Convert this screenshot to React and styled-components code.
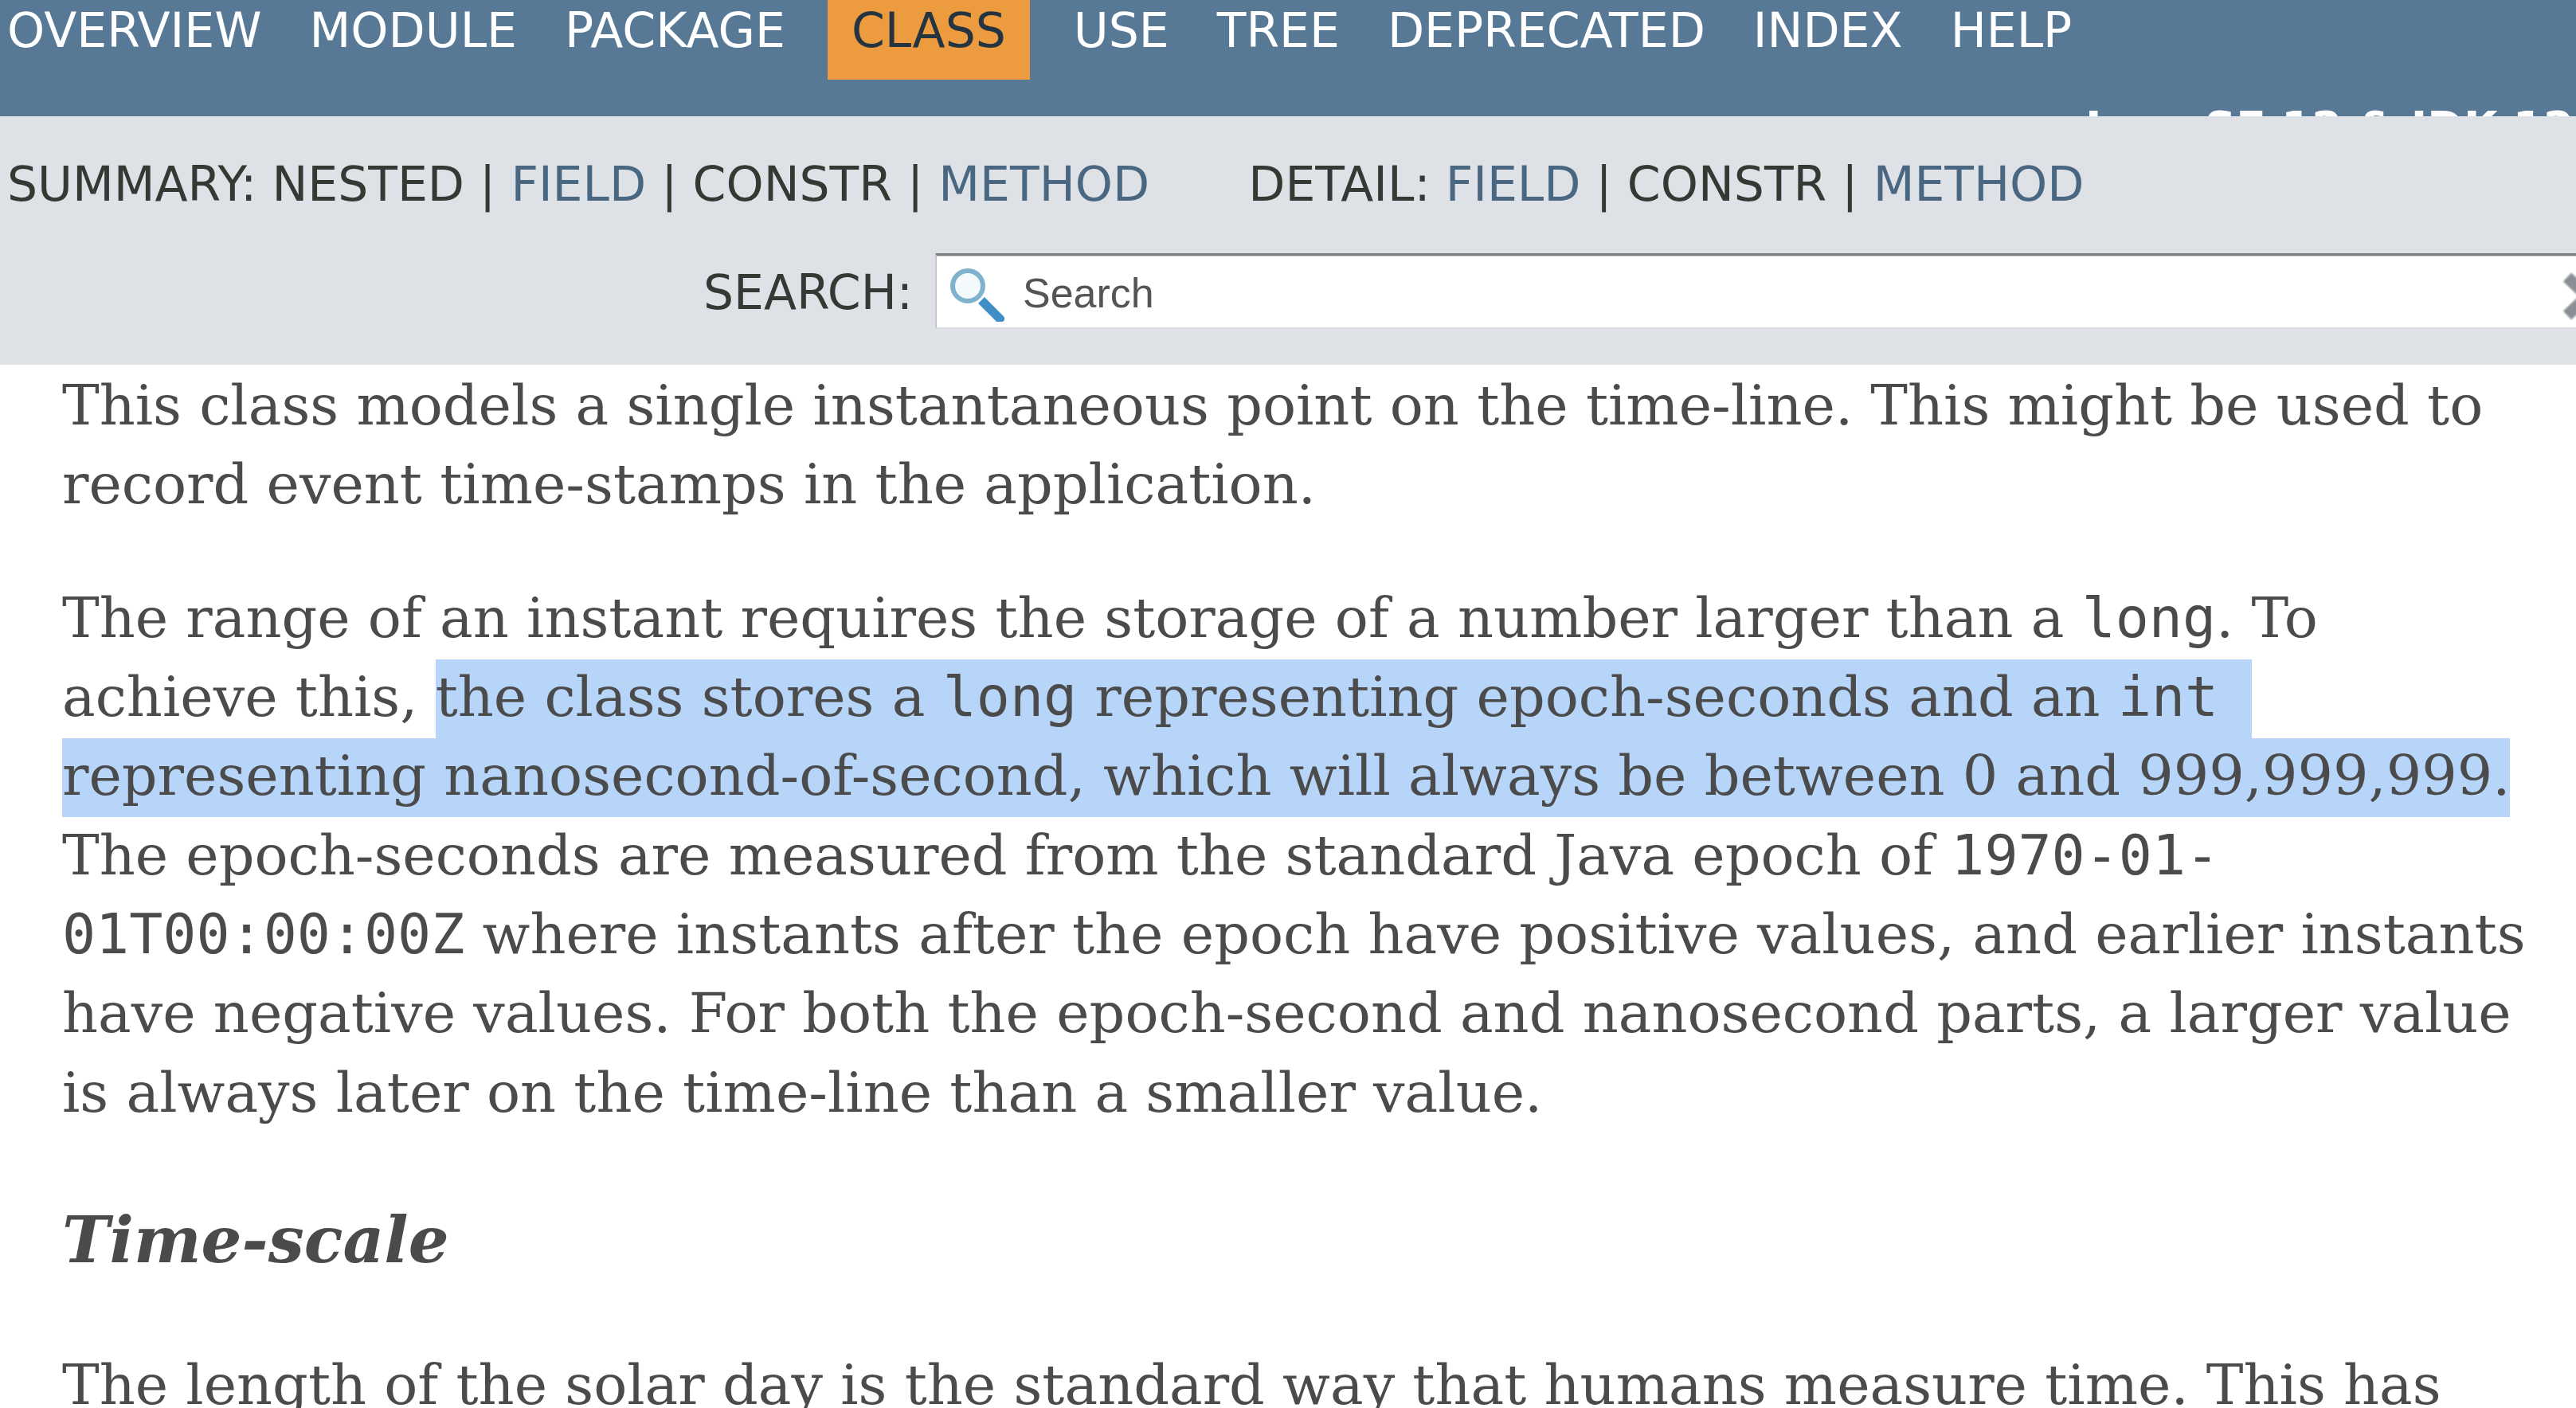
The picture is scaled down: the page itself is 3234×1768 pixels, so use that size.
import React from 'react'
import styled, { createGlobalStyle } from 'styled-components'

const GlobalStyle = createGlobalStyle`
    html, body {
        margin: 0;
        width: 3234px;
        height: 1768px;
        overflow: hidden;
        background: #fff;
    }
`

const Page = styled.div`
    width: 3234px;
    height: 1768px;
    overflow: hidden;
    font-family: "DejaVu Sans", sans-serif;
`

const TopNav = styled.nav`
    height: 146px;
    background: #577996;
    overflow: hidden;
    display: flex;
    flex-direction: column;
    color: #fff;
`

const NavList = styled.ul`
    display: flex;
    gap: 60px;
    list-style: none;
    margin: 0;
    padding: 0 0 0 9px;
    height: 100px;
    flex: none;
`

const NavItem = styled.li`
    font-size: 60px;
    line-height: 76px;
    white-space: nowrap;
    ${props => props.$active && `
        background: #ec9b3e;
        color: #253441;
        padding: 0 30px;
        margin: 0 -5px 0 -7px;
    `}
`

const AboutLanguage = styled.div`
    margin: 25px 0 0 2618px;
    font-size: 55px;
    line-height: 70px;
    font-weight: bold;
    white-space: nowrap;
`

const SubNav = styled.div`
    height: 312px;
    background: #dee2e7;
    color: #353833;
    font-size: 60px;
    display: flex;
    flex-direction: column;
`

const SubNavRow = styled.div`
    display: flex;
    gap: 124px;
    padding: 46px 0 0 9px;
    line-height: 78px;
    white-space: nowrap;
    height: 120px;
    box-sizing: border-box;
    flex: none;
`

const NavLink = styled.a`
    color: #4a6782;
`

const SearchRow = styled.div`
    display: flex;
    align-items: flex-start;
    padding: 0 0 0 883px;
    margin-top: 52px;
    line-height: 78px;
`

const SearchLabel = styled.label`
    width: 291px;
    flex: none;
    margin-top: 10px;
`

const SearchBox = styled.div`
    width: 2104px;
    height: 95px;
    flex: none;
    box-sizing: border-box;
    background: #fff;
    border-top: 3px solid #7f7f7f;
    border-left: 2px solid #c6c6c6;
    border-bottom: 2px solid #dcdcdc;
    box-shadow: inset 0 1px 0 #c0c0c0;
    display: flex;
    align-items: center;
    padding-left: 17px;
    font-family: "Liberation Sans", Arial, sans-serif;
    font-size: 52px;
    color: #555;
`

const SearchIcon = styled.svg`
    width: 68px;
    height: 68px;
    flex: none;
    margin-top: 8px;
    filter: blur(0.7px);
`

const Placeholder = styled.span`
    margin: 4px 0 0 23px;
`

const ClearIcon = styled.svg`
    width: 60px;
    height: 60px;
    flex: none;
    margin: 12px 0 0 auto;
    filter: blur(0.8px);
`

const Content = styled.main`
    padding: 1px 50px 0 78px;
    color: #4b4b4b;
    font-family: "DejaVu Serif", serif;
    font-size: 69.95px;
    line-height: 99.35px;
`

const Para = styled.p`
    margin: 0 0 68px;
`

const Code = styled.code`
    font-family: "DejaVu Sans Mono", monospace;
    font-size: 69.95px;
`

const Selected = styled.span`
    background: #b7d4f9;
    padding: 6px 0 12px;
    ${props => props.$trail && 'padding-right: 42px;'}
`

const Heading = styled.h3`
    margin: 0 0 82px;
    padding-top: 18px;
    font-size: 80px;
    line-height: 100px;
    font-weight: bold;
    font-style: italic;
`

const Sep = () => ' | '

export default function App () {
    return (
        <Page>
            <GlobalStyle />
            <TopNav>
                <NavList>
                    <NavItem>OVERVIEW</NavItem>
                    <NavItem>MODULE</NavItem>
                    <NavItem>PACKAGE</NavItem>
                    <NavItem $active>CLASS</NavItem>
                    <NavItem>USE</NavItem>
                    <NavItem>TREE</NavItem>
                    <NavItem>DEPRECATED</NavItem>
                    <NavItem>INDEX</NavItem>
                    <NavItem>HELP</NavItem>
                </NavList>
                <AboutLanguage>Java SE 12 &amp; JDK 12</AboutLanguage>
            </TopNav>
            <SubNav>
                <SubNavRow>
                    <span>
                        SUMMARY: NESTED<Sep /><NavLink>FIELD</NavLink><Sep />CONSTR<Sep /><NavLink>METHOD</NavLink>
                    </span>
                    <span>
                        DETAIL: <NavLink>FIELD</NavLink><Sep />CONSTR<Sep /><NavLink>METHOD</NavLink>
                    </span>
                </SubNavRow>
                <SearchRow>
                    <SearchLabel>SEARCH:</SearchLabel>
                    <SearchBox>
                        <SearchIcon viewBox="0 0 68 68">
                            <circle cx="22" cy="23" r="19" fill="#f4f9fc" stroke="#7fb3cd" strokeWidth="6" />
                            <path d="M39 41 L66 68" stroke="#3f8fc6" strokeWidth="11" />
                        </SearchIcon>
                        <Placeholder>Search</Placeholder>
                        <ClearIcon viewBox="0 0 60 60">
                            <path d="M5 6 L55 54 M55 6 L5 54" stroke="#8a8f96" strokeWidth="15" fill="none" />
                        </ClearIcon>
                    </SearchBox>
                </SearchRow>
            </SubNav>
            <Content>
                <Para>
                    This class models a single instantaneous point on the time-line. This might be used to record event time-stamps in the application.
                </Para>
                <Para>
                    The range of an instant requires the storage of a number larger than a <Code>long</Code>. To achieve this, <Selected $trail>the class stores a <Code>long</Code> representing epoch-seconds and an <Code>int</Code></Selected><br />
                    <Selected>representing nanosecond-of-second, which will always be between 0 and 999,999,999.</Selected> The epoch-seconds are measured from the standard Java epoch of <Code>1970-01-01T00:00:00Z</Code> where instants after the epoch have positive values, and earlier instants have negative values. For both the epoch-second and nanosecond parts, a larger value is always later on the time-line than a smaller value.
                </Para>
                <Heading>Time-scale</Heading>
                <Para>
                    The length of the solar day is the standard way that humans measure time. This has
                </Para>
            </Content>
        </Page>
    )
}
